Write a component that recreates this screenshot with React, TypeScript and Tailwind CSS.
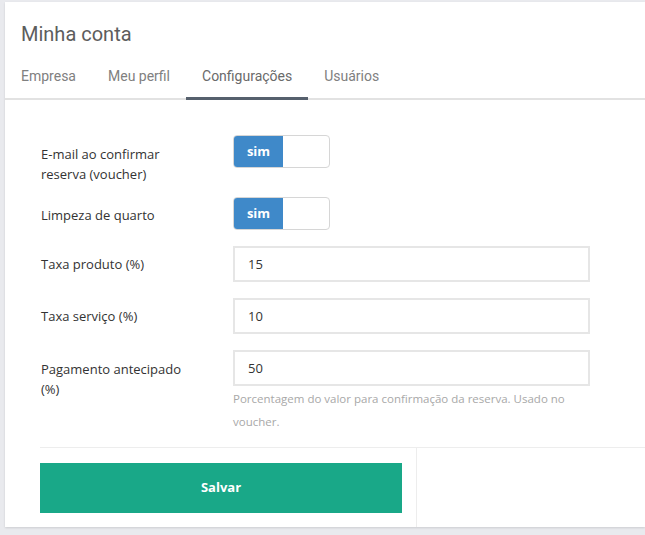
import { useState } from "react";

const tabs = ["Empresa", "Meu perfil", "Configurações", "Usuários"];

function Toggle({ on, onChange }: { on: boolean; onChange: () => void }) {
  return (
    <button
      type="button"
      onClick={onChange}
      className="flex h-[33px] w-[97px] overflow-hidden rounded-[4px] border border-[#d6d6d6] bg-white p-0"
    >
      {on ? (
        <>
          <span className="flex h-full w-[49px] items-center justify-center bg-[#3f89c9] text-[13px] font-bold text-white">sim</span>
          <span className="flex-1" />
        </>
      ) : (
        <>
          <span className="flex-1" />
          <span className="flex h-full w-[49px] items-center justify-center bg-[#e5e5e5] text-[13px] font-bold text-[#555]">não</span>
        </>
      )}
    </button>
  );
}

export default function App() {
  const [tab, setTab] = useState(2);
  const [voucher, setVoucher] = useState(true);
  const [limpeza, setLimpeza] = useState(true);
  const [form, setForm] = useState({ produto: "15", servico: "10", antecipado: "50" });

  const inputCls =
    "h-[36px] w-[357px] border-2 border-[#e6e6e6] bg-white px-[13px] text-[13px] text-[#333] outline-none";

  return (
    <div className="min-h-[535px] bg-[#e9eaee] pl-[5px] pt-[2px] font-['Open_Sans',sans-serif]">
      <div className="bg-white shadow-[0_1px_2px_rgba(0,0,0,0.12)]">
        {/* Cabeçalho */}
        <h1 className="px-[16px] pt-[19px] text-[20px] leading-[26px] text-[#5d5d5d] font-['Roboto',sans-serif]">Minha conta</h1>
        <div className="mt-[19px] flex border-b-2 border-[#e2e2e2] font-['Roboto',sans-serif]">
          {tabs.map((t, i) => (
            <button
              key={t}
              onClick={() => setTab(i)}
              className={`-mb-[2px] px-[16px] pb-[11px] text-[14px] leading-[20px] ${
                tab === i ? "border-b-[3px] border-[#56606d] text-[#6a6a6a]" : "border-b-[3px] border-transparent text-[#808080]"
              }`}
            >
              {t}
            </button>
          ))}
        </div>

        {/* Formulário */}
        <div className="pl-[35px] pt-[35px] text-[13px] text-[#333]">
          <div className="mb-[13px] flex">
            <label className="w-[193px] pl-[1px] pt-[9px] leading-[20px]">
              E-mail ao confirmar
              <br />
              reserva (voucher)
            </label>
            <Toggle on={voucher} onChange={() => setVoucher(!voucher)} />
          </div>
          <div className="mb-[16px] flex">
            <label className="w-[193px] pl-[1px] pt-[8px] leading-[20px]">Limpeza de quarto</label>
            <Toggle on={limpeza} onChange={() => setLimpeza(!limpeza)} />
          </div>
          <div className="mb-[16px] flex">
            <label className="w-[193px] pl-[1px] pt-[8px] leading-[20px]">Taxa produto (%)</label>
            <input
              className={inputCls}
              value={form.produto}
              onChange={(e) => setForm({ ...form, produto: e.target.value })}
            />
          </div>
          <div className="mb-[16px] flex">
            <label className="w-[193px] pl-[1px] pt-[8px] leading-[20px]">Taxa serviço (%)</label>
            <input
              className={inputCls}
              value={form.servico}
              onChange={(e) => setForm({ ...form, servico: e.target.value })}
            />
          </div>
          <div className="flex pb-[14px]">
            <label className="w-[193px] pl-[1px] pt-[9px] leading-[20px]">
              Pagamento antecipado
              <br />
              (%)
            </label>
            <div>
              <input
                className={inputCls}
                value={form.antecipado}
                onChange={(e) => setForm({ ...form, antecipado: e.target.value })}
              />
              <p className="w-[357px] pt-[1px] text-[11.5px] leading-[23px] text-[#a8a8a8]">
                Porcentagem do valor para confirmação da reserva. Usado no voucher.
              </p>
            </div>
          </div>

          <div className="flex border-t border-[#ededed]">
            <div className="w-[377px] border-r border-[#ededed] pb-[14px] pt-[15px]">
              <button className="h-[50px] w-[362px] bg-[#19a888] text-[13px] font-bold text-white">Salvar</button>
            </div>
          </div>
        </div>
      </div>
    </div>
  );
}
